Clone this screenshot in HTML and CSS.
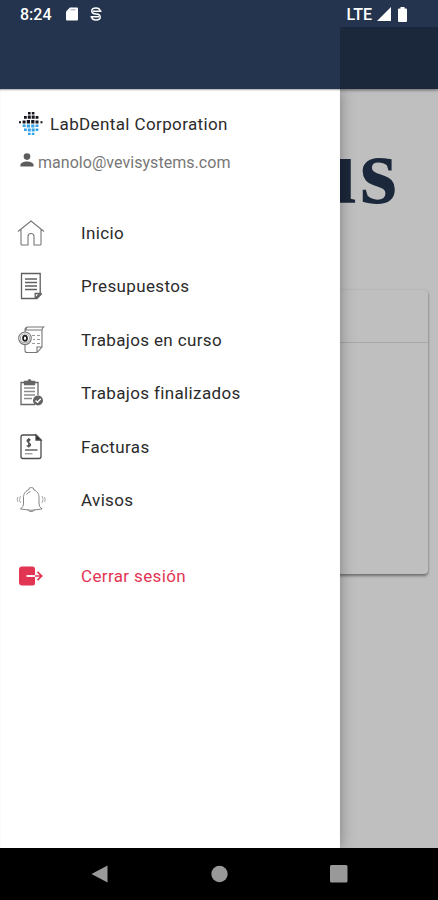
FILE: index.html
```html
<!DOCTYPE html>
<html lang="es">
<head>
<meta charset="utf-8">
<title>LabDental</title>
<link rel="stylesheet" href="styles.css">
</head>
<body>
<div class="device">
  <div class="app">
    <header class="appbar"></header>
    <main class="page">
      <div class="brand">us</div>
      <section class="card"><div class="card-head"></div></section>
    </main>
    <div class="scrim"></div>
    <aside class="drawer">
      <div class="account">
        <div class="company">
          <svg class="logo" width="26" height="26" viewBox="0 0 26 26">
            <g fill="#15151f">
              <path d="M10 1h2.600v2.400H10zM13.800 1h2.600v2.400h-2.600zM6 5h2.800v2.800H6zM9.800 4.600h3v3.200h-3zM13.700 4.600h3v3.200h-3zM17.600 5h2.800v2.800h-2.800zM1 10.200h2v2H1zM4.600 9.400h3v3h-3zM8.800 9h3.200v3.400H8.800zM13.200 9h3.200v3.400h-3.200zM17.500 9.400h3v3h-3zM22.500 10.200h2v2h-2z"/>
            </g>
            <g fill="#35a3ea">
              <path d="M4.600 13.600h3v2.400h-3zM8.800 13.600h3.200v3H8.800zM13.200 13.600h3.200v3h-3.200zM17.500 13.600h3v2.400h-3zM6 17.400h2.800v2.600H6zM9.800 17.600h3v3h-3zM13.700 17.600h3v3h-3zM17.600 17.400h2.800v2.600h-2.800zM10 21.800h2.600v2.200H10zM13.800 21.800h2.600v2.200h-2.600z"/>
            </g>
          </svg>
          <span>LabDental Corporation</span>
        </div>
        <div class="email">
          <svg width="14" height="14" viewBox="0 0 14 14" fill="#5c5c5c"><circle cx="7" cy="3.600" r="3.300"/><path d="M.4 13.600v-1.700C.4 9.600 4 8.400 7 8.400s6.600 1.200 6.600 3.500v1.700z"/></svg>
          <span>manolo@vevisystems.com</span>
        </div>
      </div>
      <nav class="menu">
        <a class="item">
          <svg width="30" height="30" viewBox="0 0 30 30" fill="none" stroke="#777" stroke-width="1.100"><path d="M2 13.500 15 3l13 10.500M5 11.500V26q0 1 1 1h6v-8.500a3 3 0 0 1 6 0V27h6q1 0 1-1V11.500"/></svg>
          <span>Inicio</span>
        </a>
        <a class="item">
          <svg width="30" height="30" viewBox="0 0 30 30" fill="none" stroke="#5f5f5f" stroke-width="1.300"><path d="M5.500 2.500h18.700v19.500l-5 5.500H5.500zM19.200 27.500V22.500h5M24.200 22l1.200 1-4.500 4.500h-2"/><path d="M9 8h12M9 11.500h12M9 15h12M9 18.500h12"/></svg>
          <span>Presupuestos</span>
        </a>
        <a class="item">
          <svg width="30" height="30" viewBox="0 0 30 30" fill="none" stroke="#777" stroke-width="1.100"><path d="M9 7V5q0-3 3-3h15.500q-1.500 1-1.500 3v17l-5 5.500H11q-2 0-2-2v-6M12 2q-2 0-2 3h16M26 22h-5v5.500"/><path d="M16 10.500h3m2 0h3m-7 4h2m2 0h3m-8 4h3m2 0h3" stroke="#999"/><circle cx="9" cy="13.300" r="6.300" fill="#fff"/><circle cx="9" cy="13.300" r="4.600" stroke="#aaa"/><ellipse cx="9" cy="13.300" rx="2" ry="2.600" stroke="#222" stroke-width="1.800"/></svg>
          <span>Trabajos en curso</span>
        </a>
        <a class="item">
          <svg width="30" height="30" viewBox="0 0 30 30" fill="none" stroke="#666" stroke-width="1.300"><path d="M8.500 4.500H5v22h14M18.500 4.500H22V17"/><path d="M8.500 6.500v-3h3.200q1.800-3.600 3.600 0h3.200v3z" fill="#666"/><path d="M8 10h11M8 13.500h11M8 17h11M8 20.500h8" stroke="#8c8c8c"/><circle cx="22" cy="22.500" r="5" fill="#626262" stroke="none"/><path d="m19.500 22.500 2 1.800 3.300-3.500" stroke="#fff"/></svg>
          <span>Trabajos finalizados</span>
        </a>
        <a class="item">
          <svg width="30" height="30" viewBox="0 0 30 30" fill="none" stroke="#4c4c4c" stroke-width="1.300"><path d="M20 3H7Q5 3 5 5v19.500q0 2 2 2h16q2 0 2-2V8z"/><path d="M20 3v5h5z" fill="#222"/><path d="M14.500 8.200q-1.800-1.400-3.300 0c-1.300 2.200 3.600 2.700 3.300 4.800-.5 1.700-2.800 1.500-3.700.3M12.800 6v9.500"/><path d="M9 18h12.500"/><path d="M9 21.700h7.500" stroke="#999"/></svg>
          <span>Facturas</span>
        </a>
        <a class="item">
          <svg width="30" height="30" viewBox="0 0 30 30" fill="none" stroke="#858585" stroke-width="1"><path d="M12.500 5q0-2.500 2.800-2.500T18 5c4 1.500 5 4.500 5 8v6q0 2.500 3 5-11 2.600-21.500 0 3-2.500 3-5v-6c0-3.500 1-6.500 5-8zM11.500 24.800q3.500 3.500 7.500 0M10.500 9.500q1.500-2.500 4-2.800"/><path d="M4.500 11q-2.200 3.500 0 7M2 12q-1.800 2.500 0 5M26 11q2.200 3.500 0 7M28.500 12q1.400 2.500 0 5" stroke="#aaa"/></svg>
          <span>Avisos</span>
        </a>
        <a class="item logout">
          <svg width="30" height="30" viewBox="0 0 30 30"><path d="M6 5.500h10.500q2.500 0 2.500 2.500v14q0 2.500-2.500 2.500H6q-3 0-3-3v-13q0-3 3-3z" fill="#e23554"/><path d="M10.500 15H19" stroke="#fff" stroke-width="1.900"/><path d="M19 15h6.500M21.500 10.800l4.200 4.200-4.200 4.200" fill="none" stroke="#e23554" stroke-width="1.700"/></svg>
          <span>Cerrar sesión</span>
        </a>
      </nav>
    </aside>
    <div class="statusbar">
      <span class="clock">8:24</span>
      <svg class="sd" width="12" height="14" viewBox="0 0 12 14"><path d="M4 .5h7q1 0 1 1v11q0 1-1 1H1q-1 0-1-1V4.500z" fill="#fff"/><path d="M4.500 2.800h5" stroke="#9aa4b4" stroke-width="1"/></svg>
      <svg class="sync" width="12" height="14" viewBox="0 0 12 14" fill="none" stroke="#fff" stroke-width="1.500"><path d="M10 3.600Q9.500 1 6 1 1.800 1 1.800 4q0 2.700 4.200 3t4.200 3q0 3-4.200 3-3.700 0-4.200-2.600M3 4.300h8.500M.5 9.700H9"/></svg>
      <span class="lte">LTE</span>
      <svg class="signal" width="14" height="14" viewBox="0 0 14 14"><path d="M14 0v14H0z" fill="#fff"/></svg>
      <svg width="9" height="15" viewBox="0 0 9 15"><path d="M2.500 0h4v1.500H8q1 0 1 1V14q0 1-1 1H1q-1 0-1-1V2.500q0-1 1-1h1.500z" fill="#fff"/></svg>
    </div>
  </div>
  <footer class="navbar">
    <svg width="17" height="18" viewBox="0 0 17 18"><path d="M16.500.5v17L.5 9z" fill="#999"/></svg>
    <svg width="17" height="18" viewBox="0 0 17 18"><circle cx="8.500" cy="9" r="8.200" fill="#999"/></svg>
    <svg width="18" height="18" viewBox="0 0 18 18"><rect width="17.500" height="17.500" rx="1.500" fill="#999"/></svg>
  </footer>
</div>
</body>
</html>
```
FILE: styles.css
```css
* { box-sizing: border-box; }
body { margin: 0; font-family: Roboto, "Liberation Sans", sans-serif; }
.device { display: flex; flex-direction: column; width: 438px; height: 900px; overflow: hidden; background: #000; }
.app { position: relative; flex: 1; display: flex; flex-direction: column; overflow: hidden; background: #fff; }
.appbar { flex: none; height: 89px; background: #25344e; box-shadow: 0 1px 3px rgba(0, 0, 0, .5); z-index: 1; }
.page { flex: 1; padding: 0 10px 0 12px; }
.brand { height: 201px; padding: 26px 29px 0 0; text-align: right; font: bold 96px/112px "Liberation Serif", serif; letter-spacing: 2px; color: #25344e; }
.card { height: 284px; border-radius: 4px; background: #fff; box-shadow: 0 2px 3px rgba(0, 0, 0, .42), 0 0 2px rgba(0, 0, 0, .12); }
.card-head { height: 53px; border-bottom: 1px solid #e0e0e0; }
.scrim { position: absolute; inset: 27px 0 0 340px; z-index: 2; background: rgba(0, 0, 0, .25); }
.drawer { position: absolute; top: 89px; bottom: 0; left: 0; z-index: 3; width: 340px; background: #fff; box-shadow: 0 0 14px rgba(0, 0, 0, .35), inset 0 2px 2px -1px rgba(0, 0, 0, .35); clip-path: inset(0 -24px 0 0); }
.account { height: 117px; padding: 21px 0 0 18px; }
.company { display: flex; align-items: center; gap: 6px; height: 27px; font-size: 17px; letter-spacing: .38px; color: #2b2b2b; }
.email { display: flex; align-items: center; gap: 4px; height: 26px; margin-top: 12px; padding-left: 2px; font-size: 16px; letter-spacing: .04px; color: #777; }
.email svg { margin-bottom: 4px; }
.menu { display: flex; flex-direction: column; }
.item { display: flex; align-items: center; gap: 34.500px; height: 53.500px; padding-left: 16.500px; font-size: 17px; letter-spacing: .36px; color: #2b2b2b; }
.item svg { margin-left: -.5px; }
.item span { margin-left: .5px; }
.logout { margin-top: 22px; color: #e23554; }
.statusbar { position: absolute; inset: 0 0 auto; z-index: 4; display: flex; align-items: center; height: 28px; padding: 0 31px 0 20px; background: linear-gradient(#25344e 27px, transparent 27px); color: #fff; font-size: 16px; font-weight: 500; }
.sd { margin-left: 14px; }
.sync { margin-left: 12px; }
.lte { margin-left: auto; }
.signal { margin: 0 7px 0 5px; }
.navbar { display: flex; flex: none; align-items: center; gap: 102.500px; height: 52px; padding-left: 91px; background: #000; }
```
